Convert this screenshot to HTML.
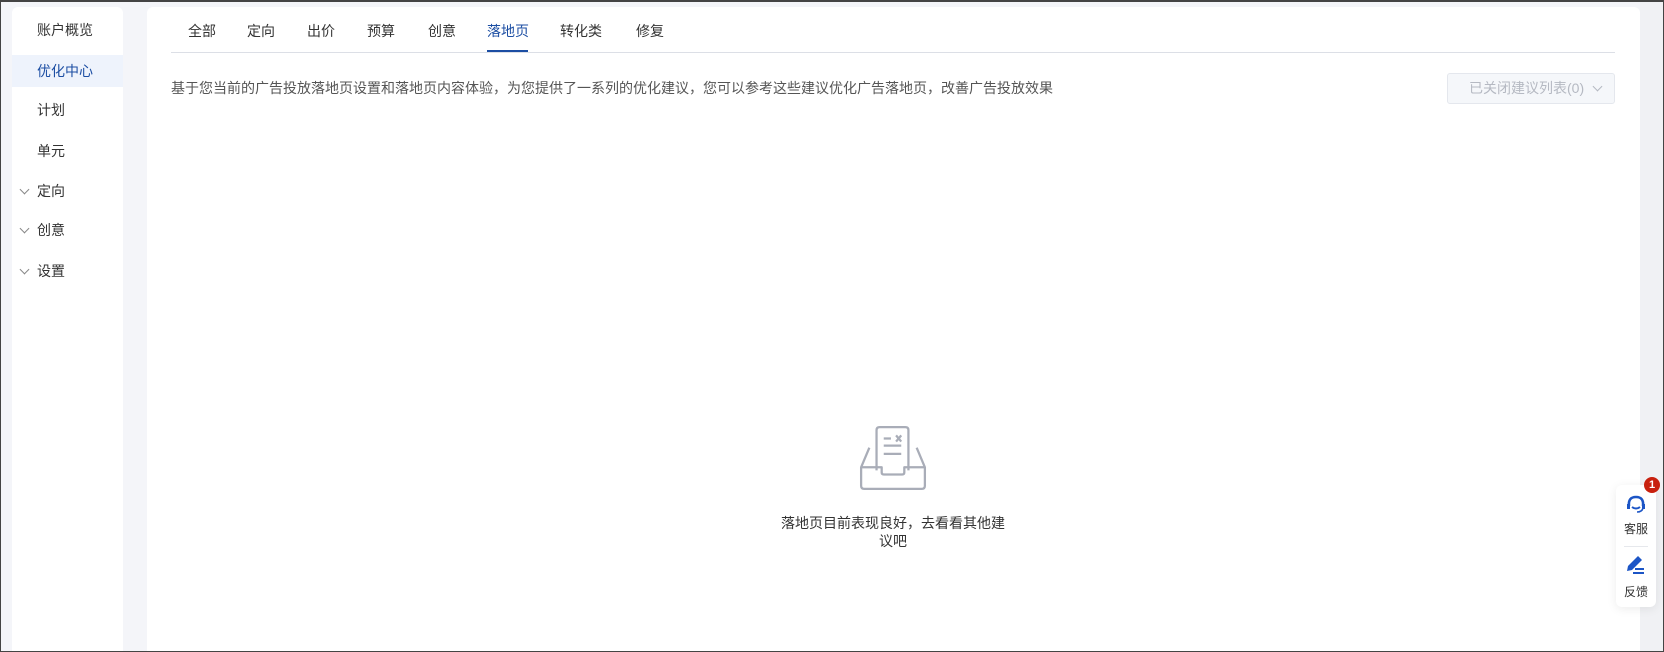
<!DOCTYPE html>
<html><head><meta charset="utf-8"><style>
*{margin:0;padding:0;box-sizing:border-box}
body{width:1664px;height:652px;overflow:hidden;font-family:"Liberation Sans","Noto Sans CJK SC",sans-serif;background:#f4f5f9;position:relative}
.frame{position:absolute;left:0;top:0;width:1664px;height:652px;border:1px solid #444;border-top:2px solid #444;pointer-events:none;z-index:10}
.side{position:absolute;left:12px;top:7px;width:111px;height:645px;background:#fff;border-radius:6px 6px 0 0}
.side div{position:absolute;left:0;width:111px;height:32px;line-height:32px;font-size:14px;color:#333;padding-left:25px}
.side .act{background:#eef3fc;color:#1c4ea3}
.side .arr::before{content:"";position:absolute;left:9px;top:11px;width:6px;height:6px;border-right:1px solid #888;border-bottom:1px solid #888;transform:rotate(45deg)}
.main{position:absolute;left:147px;top:7px;width:1493px;height:645px;background:#fff;border-radius:6px 6px 0 0}
.tabs{position:absolute;left:24px;top:0;width:1444px;height:46px;border-bottom:1px solid #dcdfe6}
.tabs span{position:absolute;top:15px;font-size:14px;color:#333;line-height:18px}
.tabs .on{color:#1c4ea3}
.ul{position:absolute;left:316px;top:43px;width:41px;height:2px;background:#1c4ea3}
.desc{position:absolute;left:24px;top:72px;font-size:14px;color:#555;line-height:18px;white-space:nowrap}
.btn{position:absolute;left:1300px;top:66px;width:168px;height:31px;border:1px solid #e4e7ed;background:#f5f7fa;border-radius:3px;font-size:14px;color:#b5b9c2;line-height:29px;padding-left:21px}
.btn::after{content:"";position:absolute;left:146px;top:9px;width:6px;height:6px;border-right:1px solid #b5b9c2;border-bottom:1px solid #b5b9c2;transform:rotate(45deg)}
.empty{position:absolute;left:780px;top:514px;width:226px;text-align:center;font-size:14px;color:#333;line-height:18px}
.strip{position:absolute;left:1640px;top:0;width:24px;height:652px;background:#f0f1f4}
.wid{position:absolute;left:1616px;top:485px;width:40px;height:122px;background:#fff;border-radius:6px;box-shadow:0 2px 10px rgba(0,0,0,.08);z-index:2}
.t{position:absolute;left:0;width:40px;text-align:center;font-size:12px;color:#333;line-height:14px}
.badge{position:absolute;left:1644px;top:477px;width:16px;height:16px;border-radius:50%;background:#c8200e;color:#fff;font-size:11px;font-weight:bold;text-align:center;line-height:16px;z-index:3}
</style></head><body>
<div class="strip"></div>
<div class="side">
<div style="top:7px">账户概览</div>
<div class="act" style="top:48px">优化中心</div>
<div style="top:87px">计划</div>
<div style="top:128px">单元</div>
<div class="arr" style="top:168px">定向</div>
<div class="arr" style="top:207px">创意</div>
<div class="arr" style="top:248px">设置</div>
</div>
<div class="main">
<div class="tabs">
<span style="left:17px">全部</span><span style="left:76px">定向</span><span style="left:136px">出价</span><span style="left:196px">预算</span><span style="left:257px">创意</span><span class="on" style="left:316px">落地页</span><span style="left:389px">转化类</span><span style="left:465px">修复</span>
<div class="ul"></div>
</div>
<div class="desc">基于您当前的广告投放落地页设置和落地页内容体验，为您提供了一系列的优化建议，您可以参考这些建议优化广告落地页，改善广告投放效果</div>
<div class="btn">已关闭建议列表(0)</div>
<svg style="position:absolute;left:710px;top:417px" width="72" height="68" viewBox="0 0 70 66" fill="none" stroke="#a9adb8" stroke-width="2.2" stroke-linejoin="round">
<path d="M12 23 L4 42 L4 60 Q4 63 7 63 L63 63 Q66 63 66 60 L66 42 L58 23"/>
<path d="M4 42 L24 42 L24 47 Q24 49 26 49 L44 49 Q46 49 46 47 L46 42 L66 42"/>
<path d="M19 45 L19 6 Q19 3 22 3 L47 3 Q50 3 50 6 L50 45"/>
<path d="M26 14 L33 14 M38 11 L43 17 M43 11 L38 17 M26 21 L43 21 M26 29 L43 29"/>
</svg>
</div>
<div class="empty">落地页目前表现良好，去看看其他建议吧</div>
<div class="wid">
<svg style="position:absolute;left:9px;top:10px" width="22" height="20" viewBox="0 0 22 20" fill="none" stroke="#1c55c6" stroke-width="2.6"><path d="M4 11 Q3 2 11 2 Q19 2 18 11"/><path d="M7 12 Q11 15 15 12" stroke-width="2"/><rect x="2" y="9" width="3" height="5" fill="#1c55c6" stroke="none"/><rect x="17" y="9" width="3" height="5" fill="#1c55c6" stroke="none"/><path d="M18 13 Q17 17 12 17" stroke-width="1.6"/></svg>
<div class="t" style="top:37px">客服</div>
<div style="position:absolute;left:8px;top:61px;width:24px;height:1px;background:#e6e8ec"></div>
<svg style="position:absolute;left:9px;top:71px" width="22" height="20" viewBox="0 0 22 20" fill="#1c55c6"><path d="M13 0 L17 4 L7 14 L2 15 L3 10 Z"/><rect x="10" y="12" width="9" height="2"/><rect x="8" y="16" width="11" height="2"/></svg>
<div class="t" style="top:100px">反馈</div>
</div>
<div class="badge">1</div>
<div class="frame"></div>
</body></html>
